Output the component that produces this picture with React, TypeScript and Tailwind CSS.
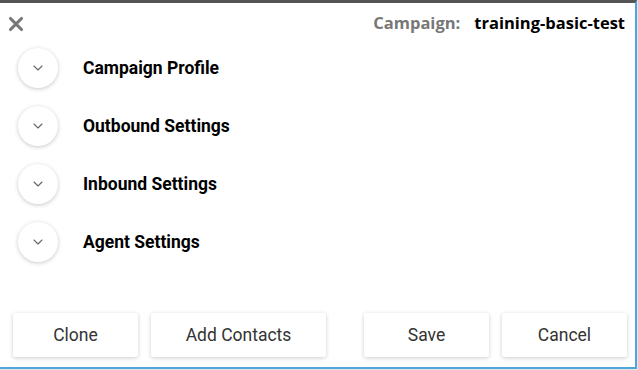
import { X, ChevronDown } from "lucide-react";

const sections = ["Campaign Profile", "Outbound Settings", "Inbound Settings", "Agent Settings"];

export default function App() {
  return (
    <div className="w-[638px] h-[370px] bg-[#e5e5e5] font-['Roboto',sans-serif]">
      <div className="w-[637px] h-[369px] bg-white border-t-[3px] border-t-[#555] border-r-2 border-b-2 border-r-[#4ea6dc] border-b-[#4ea6dc] flex flex-col">
        <div className="flex items-center justify-between h-[38px] pl-[5px] pr-[10px] pt-[3px]">
          <X className="w-[22px] h-[22px] text-[#777]" strokeWidth={3.4} />
          <div className="flex items-baseline gap-[14px] text-[16.5px] font-bold font-['Open_Sans',sans-serif]">
            <span className="text-[#777]">Campaign:</span>
            <span className="text-black">training-basic-test</span>
          </div>
        </div>
        <div className="flex flex-col -mt-[2px]">
          {sections.map((s) => (
            <div key={s} className="flex items-center h-[58px] pl-[18px]">
              <div className="w-[40px] h-[40px] rounded-full bg-white shadow-[0_1px_4px_rgba(0,0,0,0.22)] flex items-center justify-center">
                <ChevronDown className="w-[16px] h-[16px] text-[#666]" strokeWidth={1.6} />
              </div>
              <span className="ml-[25px] text-[17.5px] font-bold text-black">{s}</span>
            </div>
          ))}
        </div>
        <div className="mt-auto mb-[10px] flex items-center pl-[13px]">
          <button className="w-[125px] h-[44px] bg-white rounded-[2px] shadow-[0_1px_4px_rgba(0,0,0,0.2)] text-[17.5px] text-[#333]">Clone</button>
          <button className="ml-[13px] w-[175px] h-[44px] bg-white rounded-[2px] shadow-[0_1px_4px_rgba(0,0,0,0.2)] text-[17.5px] text-[#333]">Add Contacts</button>
          <button className="ml-[38px] w-[125px] h-[44px] bg-white rounded-[2px] shadow-[0_1px_4px_rgba(0,0,0,0.2)] text-[17.5px] text-[#333]">Save</button>
          <button className="ml-[13px] w-[125px] h-[44px] bg-white rounded-[2px] shadow-[0_1px_4px_rgba(0,0,0,0.2)] text-[17.5px] text-[#333]">Cancel</button>
        </div>
      </div>
    </div>
  );
}
